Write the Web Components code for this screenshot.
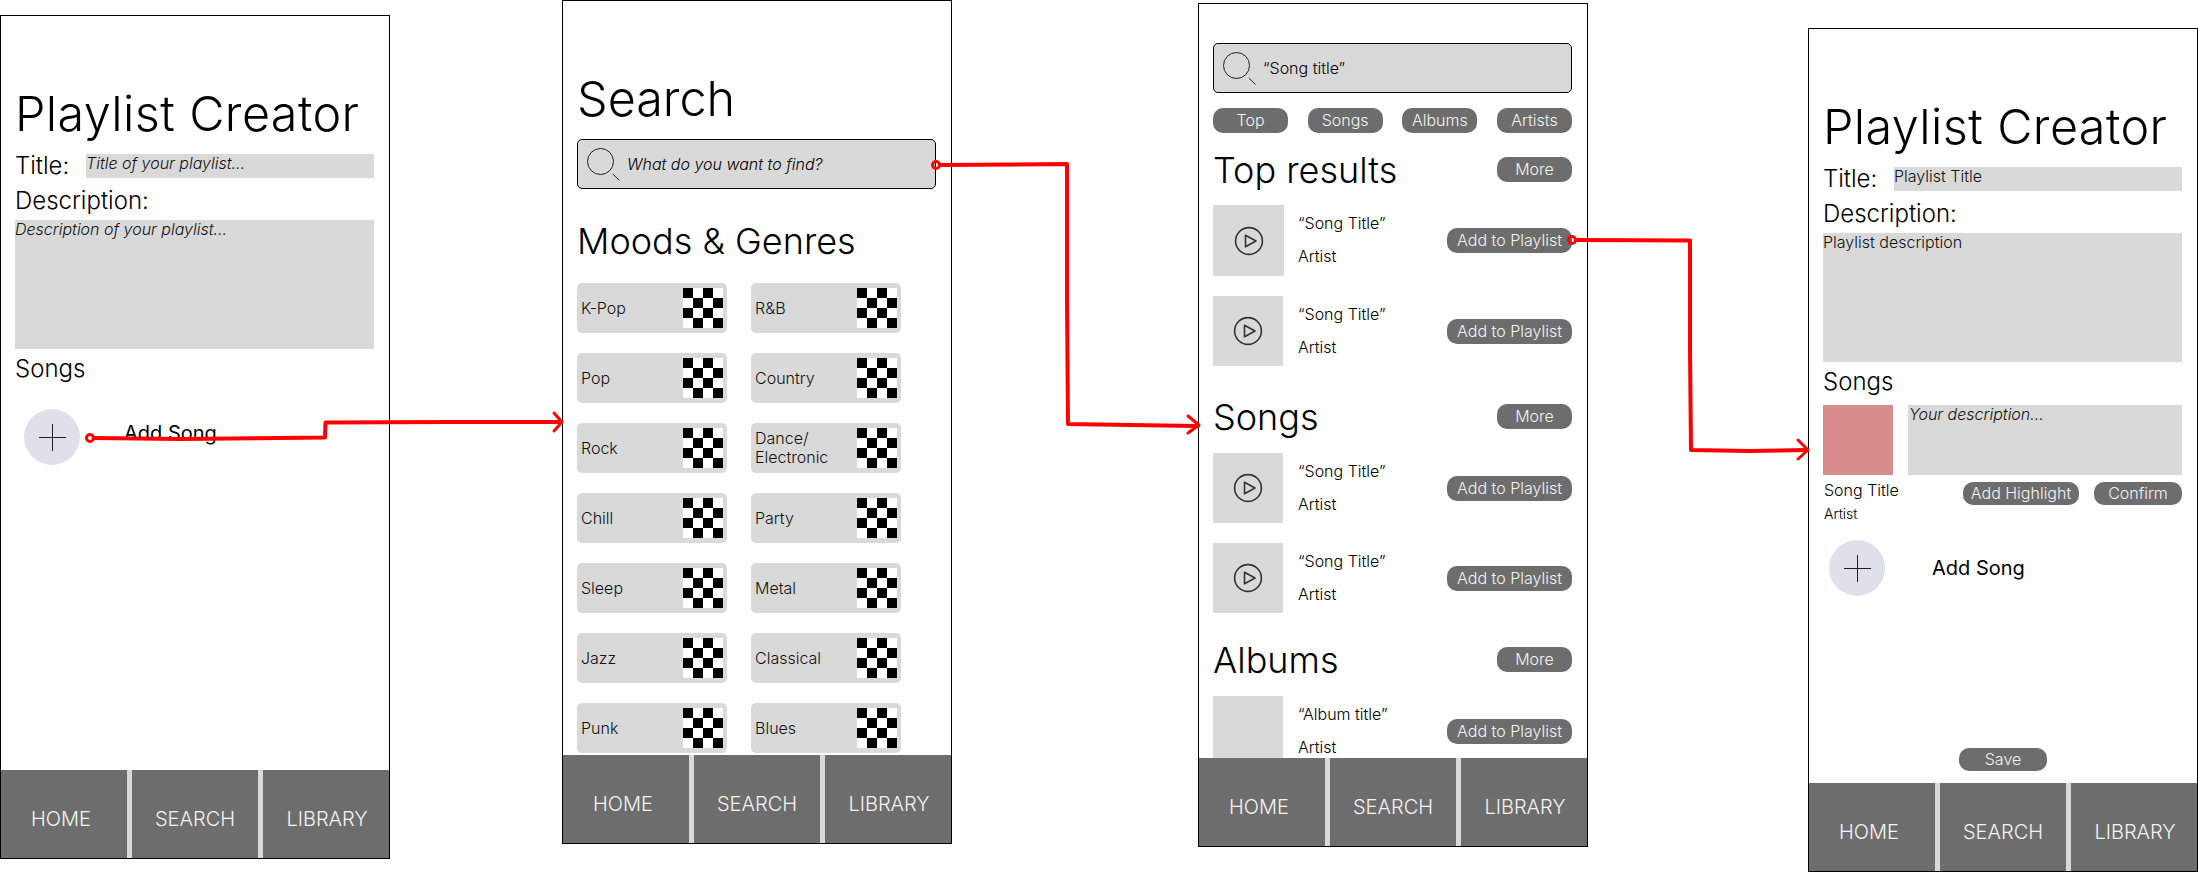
<!DOCTYPE html>
<html>
<head>
<meta charset="utf-8">
<title>Playlist Creator wireframes</title>
<style>
html,body{margin:0;padding:0;background:#fff;}
body{position:relative;width:2198px;height:872px;overflow:hidden;font-family:'Inter','Liberation Sans',sans-serif;font-weight:350;color:#000;}
</style>
</head>
<body>

<ui-phone x="0" y="15">
    <creator-form title-hint="Title of your playlist..." desc-hint="Description of your playlist..." hint></creator-form>
    <add-song style="--circle-left:23px;--label-gap:44px;--label-lift:8px;margin-top:26px"></add-song>
</ui-phone>

<ui-phone x="562" y="0">
    <genre-screen></genre-screen>
</ui-phone>

<ui-phone x="1198" y="3">
    <results-screen></results-screen>
</ui-phone>

<ui-phone x="1808" y="28">
    <creator-form title-hint="Playlist Title" desc-hint="Playlist description"></creator-form>
    <highlight-editor></highlight-editor>
    <add-song style="--circle-left:20px;--label-gap:47px;margin-top:18px"></add-song>
    <pill-button style="--w:88px;--h:23px;margin:auto auto 12px">Save</pill-button>
</ui-phone>

<flow-arrows></flow-arrows>

<script>
const FONT = "'Inter','Liberation Sans',sans-serif"

class UiPhone extends HTMLElement{
    constructor(){
        super()
        this.attachShadow({mode:'open'})
    }
    connectedCallback(){
        this.shadowRoot.innerHTML = `
        <style>
        :host{
            position:absolute;
            left:${this.getAttribute('x')}px;
            top:${this.getAttribute('y')}px;
            width:390px;
            height:844px;
            box-sizing:border-box;
            border:1px solid #000;
            background:#fff;
            display:flex;
            flex-direction:column;
            font-family:${FONT};
        }
        main{flex:1;min-height:0;overflow:hidden;display:flex;flex-direction:column;}
        </style>
        <main><slot></slot></main>
        <tab-bar></tab-bar>
        `
    }
}
customElements.define('ui-phone',UiPhone)

class TabBar extends HTMLElement{
    constructor(){
        super()
        this.attachShadow({mode:'open'}).innerHTML = `
        <style>
        :host{display:grid;grid-template-columns:1fr 1fr 1fr;column-gap:5px;height:88px;flex:none;background:#d9d9d9;}
        div{background:#6d6d6d;color:#f4f4f4;font-size:20px;line-height:24px;display:flex;align-items:center;justify-content:center;padding-top:10px;}
        div:first-of-type{padding-right:6px;}
        div:last-of-type{padding-left:2px;}
        </style>
        <div>HOME</div><div>SEARCH</div><div>LIBRARY</div>
        `
    }
}
customElements.define('tab-bar',TabBar)

class PillButton extends HTMLElement{
    constructor(){
        super()
        this.attachShadow({mode:'open'}).innerHTML = `
        <style>
        :host{
            display:flex;
            flex:none;
            align-items:center;
            justify-content:center;
            box-sizing:border-box;
            width:var(--w,75px);
            height:var(--h,25px);
            border-radius:10px;
            background:#6d6d6d;
            color:#f4f4f4;
            font-size:16px;
            line-height:19px;
            white-space:nowrap;
        }
        </style>
        <slot></slot>
        `
    }
}
customElements.define('pill-button',PillButton)

class CreatorForm extends HTMLElement{
    constructor(){
        super()
        this.attachShadow({mode:'open'})
    }
    connectedCallback(){
        const hint = this.hasAttribute('hint') ? 'italic' : 'normal'
        this.shadowRoot.innerHTML = `
        <style>
        :host{display:block;padding:68px 15px 0 14px;}
        h1{margin:0 0 -2px 0;font-size:48.500px;letter-spacing:.4px;line-height:60px;font-weight:350;}
        .title{display:flex;margin-top:12px;height:24px;}
        .label{font-size:24px;}
        .title .label{line-height:24px;}
        .field{background:#d9d9d9;font-size:16px;line-height:18px;font-style:${hint};font-weight:300;color:#111;}
        .title .field{width:288px;margin-left:auto;box-sizing:border-box;}
        .desc{display:block;line-height:29px;margin-top:8px;}
        .box{height:129px;margin-top:5px;}
        .songs{display:block;line-height:29px;margin-top:5px;}
        </style>
        <h1>Playlist Creator</h1>
        <div class="title"><span class="label">Title:</span><div class="field">${this.getAttribute('title-hint')}</div></div>
        <span class="label desc">Description:</span>
        <div class="field box">${this.getAttribute('desc-hint')}</div>
        <span class="label songs">Songs</span>
        `
    }
}
customElements.define('creator-form',CreatorForm)

class AddSong extends HTMLElement{
    constructor(){
        super()
        this.attachShadow({mode:'open'}).innerHTML = `
        <style>
        :host{display:flex;align-items:center;flex:none;padding-left:var(--circle-left,20px);}
        .circle{width:56px;height:56px;border-radius:50%;background:#dee1e9;display:flex;align-items:center;justify-content:center;}
        svg{display:block;}
        span{margin-left:var(--label-gap,47px);padding-bottom:var(--label-lift,0);font-size:20px;line-height:24px;font-weight:400;}
        </style>
        <div class="circle">
        <svg width="27" height="27" viewBox="0 0 27 27" fill="none" stroke="#1e1e1e" stroke-width="1"><path d="M13.5 0v27M0 13.5h27"/></svg>
        </div>
        <span>Add Song</span>
        `
    }
}
customElements.define('add-song',AddSong)

class HighlightEditor extends HTMLElement{
    constructor(){
        super()
        this.attachShadow({mode:'open'}).innerHTML = `
        <style>
        :host{display:block;padding:9px 15px 0 14px;flex:none;}
        .top{display:flex;gap:15px;}
        .cover{width:70px;height:70px;background:#d98c8c;flex:none;}
        .note{flex:1;height:70px;background:#d9d9d9;font-size:16px;line-height:18px;font-style:italic;font-weight:300;color:#111;padding-left:1px;}
        .bottom{display:flex;margin-top:6px;}
        .song{margin-left:1px;}
        .song b{display:block;font-weight:350;font-size:16px;line-height:19px;}
        .song i{display:block;font-style:normal;font-size:14px;line-height:17px;margin-top:5px;}
        .actions{display:flex;gap:15px;margin-left:auto;margin-top:1px;}
        </style>
        <div class="top"><div class="cover"></div><div class="note">Your description...</div></div>
        <div class="bottom">
            <div class="song"><b>Song Title</b><i>Artist</i></div>
            <div class="actions">
                <pill-button style="--w:116px;--h:23px">Add Highlight</pill-button>
                <pill-button style="--w:88px;--h:23px">Confirm</pill-button>
            </div>
        </div>
        `
    }
}
customElements.define('highlight-editor',HighlightEditor)

class SearchBox extends HTMLElement{
    constructor(){
        super()
        this.attachShadow({mode:'open'}).innerHTML = `
        <style>
        :host{display:flex;align-items:center;box-sizing:border-box;height:50px;border:1px solid #000;border-radius:5px;background:#d9d9d9;flex:none;font-size:16px;line-height:19px;position:relative;}
        svg{flex:none;margin-left:9px;width:40px;height:36px;align-self:flex-start;margin-top:8px;}
        </style>
        <svg viewBox="0 0 40 36" fill="none" stroke="#1e1e1e" stroke-width="1"><circle cx="13.5" cy="13.5" r="13"/><path d="M25.8 26L32.5 32.5"/></svg>
        <slot></slot>
        `
    }
}
customElements.define('search-box',SearchBox)

class GenreTile extends HTMLElement{
    constructor(){
        super()
        this.attachShadow({mode:'open'}).innerHTML = `
        <style>
        :host{display:flex;align-items:center;justify-content:space-between;box-sizing:border-box;width:150px;height:50px;padding:0 4px;border-radius:5px;background:#d9d9d9;font-size:16px;line-height:19px;color:#111;}
        .check{width:40px;height:40px;flex:none;background:repeating-conic-gradient(#fff 0 25%,#000 0 50%) 0 0/20px 20px;}
        </style>
        <div><slot></slot></div>
        <div class="check"></div>
        `
    }
}
customElements.define('genre-tile',GenreTile)

class GenreScreen extends HTMLElement{
    constructor(){
        super()
        const genres = ['K-Pop','R&amp;B','Pop','Country','Rock','Dance/<br>Electronic','Chill','Party','Sleep','Metal','Jazz','Classical','Punk','Blues']
        this.attachShadow({mode:'open'}).innerHTML = `
        <style>
        :host{display:block;padding:68px 15px 0 14px;}
        h1{margin:0 0 -2px 0;font-size:48.500px;line-height:60px;font-weight:350;}
        h2{margin:30px 0 0 0;font-size:36px;line-height:44px;font-weight:350;}
        search-box{margin-top:12px;}
        em{font-weight:300;}
        .grid{display:grid;grid-template-columns:150px 150px;column-gap:24px;row-gap:20px;margin-top:20px;}
        </style>
        <h1>Search</h1>
        <search-box><em>What do you want to find?</em></search-box>
        <h2>Moods &amp; Genres</h2>
        <div class="grid">${genres.map(g => `<genre-tile>${g}</genre-tile>`).join('')}</div>
        `
    }
}
customElements.define('genre-screen',GenreScreen)

class SectionHead extends HTMLElement{
    constructor(){
        super()
        this.attachShadow({mode:'open'}).innerHTML = `
        <style>
        :host{display:flex;justify-content:space-between;align-items:flex-start;height:44px;flex:none;}
        h2{margin:0;font-size:36px;line-height:46px;font-weight:350;}
        pill-button{margin-top:10px;}
        </style>
        <h2><slot></slot></h2>
        <pill-button>More</pill-button>
        `
    }
}
customElements.define('section-head',SectionHead)

class ResultRow extends HTMLElement{
    constructor(){
        super()
        this.attachShadow({mode:'open'})
    }
    connectedCallback(){
        const size = this.getAttribute('size') || 70
        const icon = this.hasAttribute('no-icon') ? '' : `
            <svg width="30" height="30" viewBox="0 0 30 30" fill="none" stroke="#333" stroke-width="1.6" stroke-linejoin="round"><circle cx="15" cy="15" r="13.4"/><path d="M11.5 9.2L22 15L11.5 20.8Z"/></svg>`
        this.shadowRoot.innerHTML = `
        <style>
        :host{display:grid;grid-template-columns:85px 1fr auto;align-items:center;height:${size}px;flex:none;}
        .thumb{width:${size}px;height:${size}px;background:#d9d9d9;display:flex;align-items:center;justify-content:center;}
        .text{align-self:start;padding-top:9px;font-size:16px;line-height:19px;}
        .text div+div{margin-top:14px;}
        </style>
        <div class="thumb">${icon}</div>
        <div class="text"><div>${this.getAttribute('name')}</div><div>Artist</div></div>
        <pill-button style="--w:125px">Add to Playlist</pill-button>
        `
    }
}
customElements.define('result-row',ResultRow)

class ResultsScreen extends HTMLElement{
    constructor(){
        super()
        this.attachShadow({mode:'open'}).innerHTML = `
        <style>
        :host{display:block;padding:39px 15px 0 14px;}
        .pills{display:flex;justify-content:space-between;margin-top:15px;}
        section-head.first{margin-top:14px;}
        section-head{margin-top:28px;}
        section-head.albums{margin-top:24px;}
        result-row{margin-top:20px;}
        section-head+result-row{margin-top:15px;}
        section-head.first+result-row{margin-top:14px;}
        </style>
        <search-box>“Song title”</search-box>
        <div class="pills">
            <pill-button>Top</pill-button><pill-button>Songs</pill-button><pill-button>Albums</pill-button><pill-button>Artists</pill-button>
        </div>
        <section-head class="first">Top results</section-head>
        <result-row size="71" name="“Song Title”"></result-row>
        <result-row name="“Song Title”"></result-row>
        <section-head>Songs</section-head>
        <result-row name="“Song Title”"></result-row>
        <result-row name="“Song Title”"></result-row>
        <section-head class="albums">Albums</section-head>
        <result-row no-icon name="“Album title”"></result-row>
        `
    }
}
customElements.define('results-screen',ResultsScreen)

// red hand drawn connectors between the screens
class FlowArrows extends HTMLElement{
    constructor(){
        super()
        this.attachShadow({mode:'open'}).innerHTML = `
        <style>
        :host{position:absolute;left:0;top:0;width:2198px;height:872px;pointer-events:none;}
        svg{display:block;}
        </style>
        <svg width="2198" height="872" viewBox="0 0 2198 872" fill="none" stroke="#ff0000" stroke-width="4" stroke-linejoin="round" stroke-linecap="round">
            <circle cx="90" cy="438" r="3.5" stroke-width="3"/>
            <path d="M94 438L180 439L325 437.5L325.500 422.500L450 422L561 422"/>
            <path d="M554 413L562 422L554 431" stroke-width="3"/>
            <circle cx="936" cy="165" r="3.5" stroke-width="3"/>
            <path d="M940 165L1067 164L1067 300L1068 424L1130 425L1198 426"/>
            <path d="M1188 416L1199 425L1188 433" stroke-width="3"/>
            <circle cx="1572" cy="240" r="3.5" stroke-width="3"/>
            <path d="M1576 240L1690 240.500L1690 350L1691 450L1750 451L1807 450"/>
            <path d="M1798 440L1808 450L1798 459" stroke-width="3"/>
        </svg>
        `
    }
}
customElements.define('flow-arrows',FlowArrows)
</script>
</body>
</html>
